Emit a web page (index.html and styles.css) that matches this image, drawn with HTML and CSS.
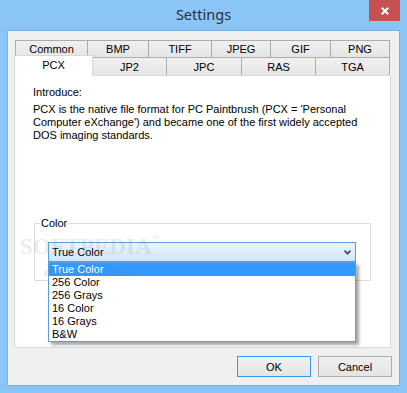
FILE: index.html
```html
<!DOCTYPE html>
<html>
<head>
<meta charset="utf-8">
<link rel="stylesheet" href="styles.css">
</head>
<body>
<div class="window">
  <div class="titlebar">
    <span></span>
    <span class="title">Settings</span>
    <div class="close">
      <svg width="8" height="8" viewBox="0 0 8 8"><path d="M0.8 0.8 L7.2 7.2 M7.2 0.8 L0.8 7.2" stroke="#fff" stroke-width="2" fill="none"/></svg>
    </div>
  </div>
  <div class="client">
    <div class="tabctl">
      <div class="tabrow row1">
        <div class="tab w-common">Common</div>
        <div class="tab w-bmp">BMP</div>
        <div class="tab w-tiff">TIFF</div>
        <div class="tab w-jpeg">JPEG</div>
        <div class="tab w-gif">GIF</div>
        <div class="tab w-png">PNG</div>
      </div>
      <div class="tabrow row2">
        <div class="tab sel w-pcx">PCX</div>
        <div class="tab w-jp2">JP2</div>
        <div class="tab w-jpc">JPC</div>
        <div class="tab w-ras">RAS</div>
        <div class="tab w-tga">TGA</div>
      </div>
      <div class="panel">
        <p class="intro">Introduce:</p>
        <p class="desc">PCX is the native file format for PC Paintbrush (PCX = 'Personal<br>Computer eXchange') and became one of the first widely accepted<br>DOS imaging standards.</p>
        <fieldset class="group">
          <legend>Color</legend>
          <div class="combo">
            <span>True Color</span>
            <svg class="chev" width="7" height="5" viewBox="0 0 7 5"><path d="M0.5 0.7 L3.5 3.7 L6.5 0.7" stroke="#505050" stroke-width="1.8" fill="none"/></svg>
            <ul class="dropdown">
              <li class="hl">True Color</li>
              <li>256 Color</li>
              <li>256 Grays</li>
              <li>16 Color</li>
              <li>16 Grays</li>
              <li>B&amp;W</li>
            </ul>
          </div>
        </fieldset>
        <div class="wm">SOFTPEDIA<sup>™</sup></div>
        <div class="wm2">www.softpedia.com</div>
      </div>
    </div>
    <div class="buttons">
      <button class="btn default">OK</button>
      <button class="btn">Cancel</button>
    </div>
  </div>
</div>
</body>
</html>
```

FILE: styles.css
```css
* { box-sizing: border-box; }
html, body { margin: 0; padding: 0; }
body {
  width: 407px;
  height: 393px;
  overflow: hidden;
  font-family: "Liberation Sans", Arial, sans-serif;
  font-size: 11px;
  color: #000;
}
.window {
  width: 407px;
  height: 393px;
  background: #8ac5f5;
  display: flex;
  flex-direction: column;
}
.titlebar {
  height: 30px;
  display: grid;
  grid-template-columns: 1fr auto 1fr;
  align-items: start;
}
.title {
  font-family: "Noto Sans", "Open Sans", sans-serif;
  font-size: 14.5px;
  color: #2e2e38;
  line-height: 30px;
  margin-top: -1px;
}
.close {
  justify-self: end;
  margin-right: 7px;
  width: 31px;
  height: 21px;
  background: #c75050;
  display: flex;
  align-items: center;
  justify-content: center;
}
.close svg { display: block; margin-top: 1px; }
.client {
  margin: 0 7px 7px 7px;
  height: 356px;
  background: #f0f0f0;
  border: 1px solid #7aafe0;
  padding: 9px 8px 0 6px;
  display: flex;
  flex-direction: column;
}
.tabctl {
  width: 377px;
  display: flex;
  flex-direction: column;
}
.tabrow { display: flex; }
.row1 { margin-left: 1px; height: 18px; }
.row2 { height: 18px; margin-top: -1px; }
.tab {
  border: 1px solid #acacac;
  background: linear-gradient(#f0f0f0, #e5e5e5);
  margin-right: -1px;
  display: flex;
  align-items: center;
  justify-content: center;
  line-height: 13px;
}
.row1 .tab { height: 18px; padding-top: 1px; }
.row2 .tab { border-bottom: none; padding-top: 1px; }
.row2 .tab.sel {
  position: relative;
  z-index: 1;
  background: #fff;
  border-color: #d9d9d9;
  border-bottom: none;
  margin-top: -2px;
  margin-bottom: -1px;
  padding-top: 0;
  padding-bottom: 2px;
}
.w-common { width: 73px; }
.w-bmp { width: 62px; }
.w-tiff { width: 64px; }
.w-jpeg { width: 60px; }
.w-gif { width: 61px; }
.w-png { width: 60px; }
.w-pcx { width: 79px; }
.w-jp2 { width: 75px; }
.w-jpc { width: 76px; }
.w-ras { width: 75px; }
.w-tga { width: 75px; }
.panel {
  position: relative;
  height: 273px;
  background: #fff;
  border: 1px solid #d9d9d9;
  padding: 10px 10px 0 18px;
}
.intro, .desc {
  margin: 0;
  line-height: 13px;
}
.desc { margin-top: 4px; }
.group {
  margin: 75px 0 0 1px;
  width: 337px;
  border: 1px solid #dcdcdc;
  padding: 12px 0 18px 13px;
  min-width: 0;
}
.group legend {
  margin-left: -8px;
  padding: 0 1px;
  line-height: 13px;
}
.combo {
  position: relative;
  width: 308px;
  height: 20px;
  border: 1px solid #569de5;
  background: linear-gradient(#ebf4fd, #cfe5fb);
  display: flex;
  align-items: center;
  justify-content: space-between;
  padding: 0 4px 0 3px;
  line-height: 13px;
}
.combo span { position: relative; z-index: 2; }
.chev { display: block; margin-top: 1px; }
.dropdown {
  position: absolute;
  z-index: 3;
  left: -1px;
  top: calc(100% + 1px);
  width: 308px;
  height: 80px;
  margin: 0;
  padding: 0;
  list-style: none;
  background: #fff;
  border: 1px solid #5a9ddf;
  box-shadow: 3px 3px 3px rgba(0, 0, 0, 0.35);
}
.dropdown li {
  height: 13px;
  line-height: 13px;
  padding-left: 3px;
}
.dropdown li.hl {
  background: #3399ff;
  color: #fff;
}
.wm {
  position: absolute;
  left: 5px;
  top: 158px;
  z-index: 2;
  font-family: "Liberation Serif", serif;
  font-weight: bold;
  font-size: 23px;
  letter-spacing: 0;
  color: rgba(150, 150, 150, 0.2);
  pointer-events: none;
}
.wm sup { font-size: 8px; vertical-align: top; }
.wm2 {
  position: absolute;
  left: 29px;
  top: 191px;
  z-index: 4;
  font-size: 10px;
  color: rgba(120, 120, 120, 0.25);
}
.buttons {
  display: flex;
  justify-content: flex-end;
  gap: 7px;
  margin-top: 8px;
  margin-right: -1px;
}
.btn {
  width: 74px;
  height: 21px;
  font-family: "Liberation Sans", Arial, sans-serif;
  font-size: 11px;
  color: #000;
  border: 1px solid #acacac;
  background: linear-gradient(#f0f0f0, #e5e5e5);
  padding: 0;
  margin: 0;
}
.btn.default { border-color: #3399ff; }
```
